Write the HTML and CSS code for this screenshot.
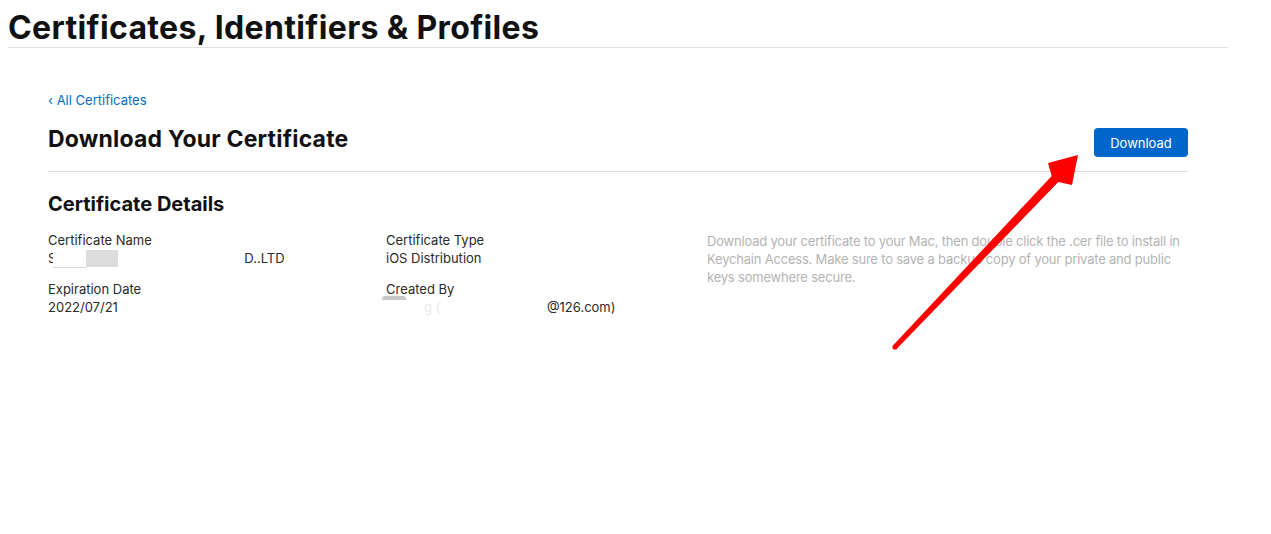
FILE: index.html
```html
<!DOCTYPE html>
<html>
<head>
<meta charset="utf-8">
<link rel="stylesheet" href="styles.css">
</head>
<body>
<div class="page">
  <header class="top">
    <h1 class="title">Certificates, Identifiers &amp; Profiles</h1>
  </header>
  <main class="main">
    <a class="back" href="#">‹ All Certificates</a>
    <div class="head-row">
      <h2 class="heading">Download Your Certificate</h2>
      <button class="btn">Download</button>
    </div>
    <section class="details">
      <h3 class="sub">Certificate Details</h3>
      <div class="grid">
        <div class="col">
          <div class="field">
            <div class="label">Certificate Name</div>
            <div class="value"><span>S</span><span class="redact redact-name"><span class="gray-box"></span><span class="under"></span></span><span class="name-end">D..LTD</span></div>
          </div>
          <div class="field">
            <div class="label">Expiration Date</div>
            <div class="value">2022/07/21</div>
          </div>
        </div>
        <div class="col">
          <div class="field">
            <div class="label">Certificate Type</div>
            <div class="value">iOS Distribution</div>
          </div>
          <div class="field">
            <div class="label">Created By</div>
            <div class="value created"><span class="redact redact-by"><span class="pill"></span><span class="faint">g (</span></span><span>@126.com)</span></div>
          </div>
        </div>
        <p class="desc">Download your certificate to your Mac, then double click the .cer file to install in Keychain Access. Make sure to save a backup copy of your private and public keys somewhere secure.</p>
      </div>
    </section>
  </main>
  <svg class="arrow" width="1271" height="534" viewBox="0 0 1271 534">
    <polygon fill="#ff0000" points="893.2,345.3 1051.7,175.9 1048,163 1078,155 1072,185 1058.3,182.1 896.8,348.7"/>
    <circle cx="895" cy="347" r="2.6" fill="#ff0000"/>
  </svg>
</div>
</body>
</html>
```

FILE: styles.css
```css
html, body {
  margin: 0;
  padding: 0;
  background: #ffffff;
}
body {
  font-family: Inter, "Noto Sans", "Liberation Sans", sans-serif;
  color: #1d1d1f;
}
.page {
  position: relative;
  width: 1271px;
  height: 534px;
  overflow: hidden;
}
.top {
  margin: 8px 0 0 8px;
  width: 1220px;
  border-bottom: 1px solid #e3e3e3;
}
.title {
  margin: 0;
  font-size: 32px;
  line-height: 39px;
  font-weight: 700;
  letter-spacing: 0.35px;
  color: #111111;
}
.main {
  margin-left: 48px;
  width: 1140px;
  padding-top: 43px;
}
.back {
  display: block;
  font-size: 13px;
  line-height: 18px;
  color: #0070c9;
  text-decoration: none;
}
.head-row {
  display: flex;
  justify-content: space-between;
  align-items: flex-start;
  padding-top: 15px;
  padding-bottom: 14px;
  border-bottom: 1px solid #dcdcdc;
}
.heading {
  margin: 1px 0 0 0;
  font-size: 23px;
  line-height: 28px;
  font-weight: 700;
  letter-spacing: 0.2px;
  color: #111111;
}
.btn {
  margin-top: 4px;
  width: 94px;
  height: 29px;
  border: none;
  border-radius: 4px;
  background: #0066cc;
  color: #ffffff;
  font-family: inherit;
  font-size: 13px;
  padding: 0;
}
.sub {
  margin: 20px 0 0 0;
  font-size: 20px;
  line-height: 24px;
  font-weight: 700;
  color: #111111;
}
.grid {
  display: grid;
  grid-template-columns: 338px 321px 1fr;
  margin-top: 15px;
}
.field + .field {
  margin-top: 13px;
}
.label, .value {
  font-size: 13px;
  line-height: 18px;
  color: #2a2a2a;
}
.value {
  display: flex;
  align-items: center;
  height: 18px;
  white-space: nowrap;
}
.redact {
  position: relative;
  display: inline-block;
  background: #ffffff;
}
.redact-name {
  width: 97px;
  height: 18px;
  margin-left: -3px;
}
.gray-box {
  position: absolute;
  left: 33px;
  top: 1px;
  width: 32px;
  height: 17px;
  background: #dcdcdc;
}
.under {
  position: absolute;
  left: 0;
  bottom: -1px;
  width: 33px;
  height: 1px;
  background: #d8d8d8;
}
.name-end {
  margin-left: 94px;
}
.created {
  margin-left: -4px;
}
.redact-by {
  width: 165px;
  height: 18px;
}
.pill {
  position: absolute;
  left: 0;
  top: -2px;
  width: 24px;
  height: 4px;
  border-radius: 3px 3px 0 0;
  background: #c8c8c8;
}
.faint {
  position: absolute;
  left: 42px;
  top: 0;
  color: #e8e8e8;
}
.desc {
  margin: 1px 0 0 0;
  width: 485px;
  font-size: 13px;
  line-height: 18px;
  letter-spacing: -0.2px;
  color: #b4b4b4;
}
.arrow {
  position: absolute;
  left: 0;
  top: 0;
  pointer-events: none;
}
```
